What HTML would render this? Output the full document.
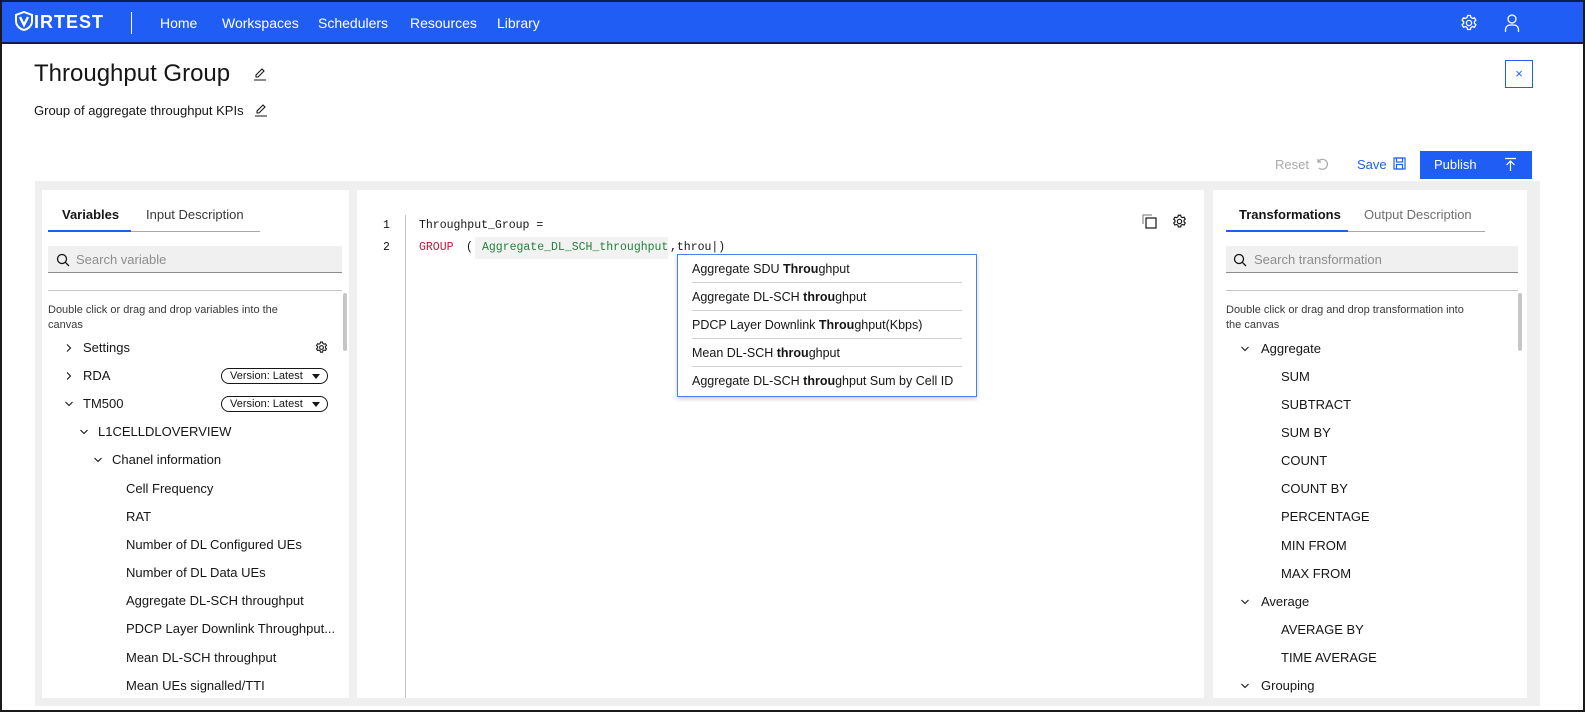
<!DOCTYPE html>
<html><head><meta charset="utf-8"><style>
*{box-sizing:border-box;margin:0;padding:0}
body{width:1585px;height:712px;overflow:hidden;background:#fff;font-family:"Liberation Sans",sans-serif;color:#161616;position:relative}
.frame{position:absolute;inset:0;border:2px solid #1a1a1a;border-top:none;pointer-events:none;z-index:10}
.nav{position:absolute;left:0;top:0;width:1585px;height:44px;background:#1f5df5;border-top:2px solid #0b1d4a;border-bottom:2px solid #0b1d4a}
.nav .logo{position:absolute;left:14px;top:9px;color:#fff;font-weight:bold;font-size:18px;letter-spacing:1px}
.nav .sep{position:absolute;left:131px;top:10px;width:1px;height:22px;background:#fff}
.nav a{position:absolute;top:13px;color:#fff;font-size:14px;text-decoration:none}
.abs{position:absolute}
.gray{position:absolute;left:35px;top:181px;width:1505px;height:525px;background:#efefef}
.panel{position:absolute;background:#fff;top:190px;height:508px}
.tab{position:absolute;font-size:13px}
.search{position:absolute;height:27px;background:#f0f0f0;border-bottom:1px solid #8d8d8d;font-size:13px;color:#8d8d8d;padding:6px 0 0 28px}
.row{position:absolute;font-size:13px;white-space:nowrap}
.chev{position:absolute;width:10px;height:10px}
.ver{position:absolute;width:107px;height:16px;border:1px solid #161616;border-radius:8px;font-size:11px;padding:1px 0 0 8px}
.ver:after{content:"";position:absolute;right:7px;top:5px;border:4px solid transparent;border-top:5px solid #161616}
.mono{font-family:"Liberation Mono",monospace;font-size:11.5px}
.dd{position:absolute;left:677px;top:254px;width:300px;height:143px;border:1px solid #4a7ff5;background:#fff;box-shadow:0 2px 4px rgba(0,0,0,.2)}
.dd div{margin:0 14px;height:28px;line-height:29px;font-size:12.5px;border-bottom:1px solid #d0d0d0}
.dd div:last-child{border:none}
</style></head><body>
<svg width="0" height="0" style="position:absolute"><defs>
<symbol id="cr" viewBox="0 0 10 10"><path d="M3 1.5 6.5 5 3 8.5" fill="none" stroke="#161616" stroke-width="1.1"/></symbol>
<symbol id="cd" viewBox="0 0 10 10"><path d="M1.5 3 5 6.5 8.5 3" fill="none" stroke="#161616" stroke-width="1.1"/></symbol>
</defs></svg>
<div class="nav">
<div class="logo"><svg width="20" height="20" viewBox="0 0 20 20" style="vertical-align:-3px"><path d="M10 1 L18 4 V10 C18 15 14 18 10 19 C6 18 2 15 2 10 V4 Z" fill="none" stroke="#fff" stroke-width="2"/><path d="M6 6 L10 14 L14 6" fill="none" stroke="#fff" stroke-width="2.4"/></svg>IRTEST</div>
<div class="sep"></div>
<a style="left:160px">Home</a><a style="left:222px">Workspaces</a><a style="left:318px">Schedulers</a><a style="left:410px">Resources</a><a style="left:497px">Library</a>
<svg class="abs" style="left:1460px;top:12px" width="18" height="18" viewBox="0 0 18 18" fill="none" stroke="#fff" stroke-width="1.3"><circle cx="9" cy="9" r="2.6"/><path d="M7.6 1.5h2.8l.5 2 1.6.9 2-.6 1.4 2.4-1.5 1.4v1.8l1.5 1.4-1.4 2.4-2-.6-1.6.9-.5 2H7.6l-.5-2-1.6-.9-2 .6-1.4-2.4 1.5-1.4V7.6L2.1 6.2l1.4-2.4 2 .6 1.6-.9z"/></svg>
<svg class="abs" style="left:1504px;top:11px" width="16" height="20" viewBox="0 0 16 20" fill="none" stroke="#fff" stroke-width="1.3"><circle cx="8" cy="6" r="4"/><path d="M1.5 19v-2.5a4.5 4.5 0 0 1 4.5-4.5h4a4.5 4.5 0 0 1 4.5 4.5V19"/></svg>
</div>
<div class="abs" style="left:34px;top:60px;font-size:24px">Throughput Group</div>
<svg class="abs" style="left:253px;top:67px" width="14" height="14" viewBox="0 0 14 14" fill="none" stroke="#161616" stroke-width="1.1"><path d="M3 10 L3 8 L9 2 L11 4 L5 10 Z M1 13 H13"/></svg>
<div class="abs" style="left:34px;top:103px;font-size:13px">Group of aggregate throughput KPIs</div>
<svg class="abs" style="left:254px;top:103px" width="14" height="14" viewBox="0 0 14 14" fill="none" stroke="#161616" stroke-width="1.1"><path d="M3 10 L3 8 L9 2 L11 4 L5 10 Z M1 13 H13"/></svg>
<div class="abs" style="left:1505px;top:60px;width:28px;height:28px;border:1px solid #1f5df5;color:#1f5df5;text-align:center;line-height:26px;font-size:13px">×</div>
<div class="abs" style="left:1275px;top:157px;font-size:13px;color:#a8a8a8">Reset</div>
<svg class="abs" style="left:1315px;top:157px" width="14" height="14" viewBox="0 0 14 14" fill="none" stroke="#a8a8a8" stroke-width="1.2"><path d="M4 11a5 5 0 1 0-1-6M3 2v3h3"/></svg>
<div class="abs" style="left:1357px;top:157px;font-size:13px;color:#1f5df5">Save</div>
<svg class="abs" style="left:1393px;top:157px" width="13" height="13" viewBox="0 0 13 13" fill="none" stroke="#1f5df5" stroke-width="1.2"><rect x="1" y="1" width="11" height="11"/><rect x="3.5" y="1" width="6" height="4"/><rect x="3.5" y="7.5" width="6" height="4.5"/></svg>
<div class="abs" style="left:1420px;top:151px;width:112px;height:28px;background:#1f5df5;color:#fff;font-size:13px;padding:6px 0 0 14px">Publish</div>
<svg class="abs" style="left:1504px;top:157px" width="13" height="15" viewBox="0 0 13 15" fill="none" stroke="#fff" stroke-width="1.2"><path d="M1 1.5h11M6.5 14V4M2.5 8l4-4 4 4"/></svg>

<div class="gray"></div>
<div class="panel" style="left:42px;width:307px">
<div class="tab" style="left:20px;top:17px;font-weight:bold">Variables</div>
<div class="tab" style="left:104px;top:17px;color:#393939">Input Description</div>
<div class="abs" style="left:6px;top:40px;width:83px;height:2px;background:#1f5df5"></div>
<div class="abs" style="left:89px;top:41px;width:129px;height:1px;background:#a8a8a8"></div>
<div class="search" style="left:6px;top:56px;width:294px">Search variable</div>
<svg class="abs" style="left:14px;top:63px" width="14" height="14" viewBox="0 0 14 14" fill="none" stroke="#161616" stroke-width="1.3"><circle cx="6" cy="6" r="4.5"/><path d="M9.3 9.3 13 13"/></svg>
<div class="abs" style="left:6px;top:100px;width:294px;height:1px;background:#c6c6c6"></div>
<div class="abs" style="left:301px;top:103px;width:4px;height:58px;background:#c6c6c6;border-radius:2px"></div>
<div class="abs" style="left:6px;top:113px;font-size:11px;line-height:15px;color:#393939">Double click or drag and drop variables into the<br>canvas</div>
</div>
<svg class="chev" style="left:64px;top:343px"><use href="#cr"/></svg><div class="row" style="left:83px;top:340px">Settings</div>
<svg class="abs" style="left:315px;top:341px" width="13" height="13" viewBox="0 0 18 18" fill="none" stroke="#161616" stroke-width="1.5"><circle cx="9" cy="9" r="2.6"/><path d="M7.6 1.5h2.8l.5 2 1.6.9 2-.6 1.4 2.4-1.5 1.4v1.8l1.5 1.4-1.4 2.4-2-.6-1.6.9-.5 2H7.6l-.5-2-1.6-.9-2 .6-1.4-2.4 1.5-1.4V7.6L2.1 6.2l1.4-2.4 2 .6 1.6-.9z"/></svg>
<svg class="chev" style="left:64px;top:371px"><use href="#cr"/></svg><div class="row" style="left:83px;top:368px">RDA</div>
<div class="ver" style="left:221px;top:368px">Version: Latest</div>
<svg class="chev" style="left:64px;top:399px"><use href="#cd"/></svg><div class="row" style="left:83px;top:396px">TM500</div>
<div class="ver" style="left:221px;top:396px">Version: Latest</div>
<svg class="chev" style="left:79px;top:427px"><use href="#cd"/></svg><div class="row" style="left:98px;top:424px">L1CELLDLOVERVIEW</div>
<svg class="chev" style="left:93px;top:455px"><use href="#cd"/></svg><div class="row" style="left:112px;top:452px">Chanel information</div>
<div class="row" style="left:126px;top:481px">Cell Frequency</div>
<div class="row" style="left:126px;top:509px">RAT</div>
<div class="row" style="left:126px;top:537px">Number of DL Configured UEs</div>
<div class="row" style="left:126px;top:565px">Number of DL Data UEs</div>
<div class="row" style="left:126px;top:593px">Aggregate DL-SCH throughput</div>
<div class="row" style="left:126px;top:621px">PDCP Layer Downlink Throughput...</div>
<div class="row" style="left:126px;top:650px">Mean DL-SCH throughput</div>
<div class="row" style="left:126px;top:678px">Mean UEs signalled/TTI</div>

<div class="panel" style="left:357px;width:847px"></div>
<div class="abs" style="left:405px;top:215px;width:1px;height:483px;background:#c6c6c6"></div>
<div class="abs mono" style="left:383px;top:219px">1</div>
<div class="abs mono" style="left:383px;top:241px">2</div>
<div class="abs mono" style="left:419px;top:219px">Throughput_Group =</div>
<div class="abs mono" style="left:419px;top:241px;color:#c0153a">GROUP</div>
<div class="abs mono" style="left:466px;top:241px">(</div>
<div class="abs mono" style="left:475px;top:237px;height:22px;width:193px;background:#f2f2f2;color:#24803e;padding:4px 0 0 7px">Aggregate_DL_SCH_throughput</div>
<div class="abs mono" style="left:670px;top:241px">,throu|)</div>
<svg class="abs" style="left:1142px;top:214px" width="15" height="15" viewBox="0 0 15 15" fill="none" stroke="#161616" stroke-width="1.2"><path d="M1 10V1h9" stroke="#8d8d8d"/><rect x="4" y="4" width="10" height="10"/></svg>
<svg class="abs" style="left:1172px;top:214px" width="15" height="15" viewBox="0 0 18 18" fill="none" stroke="#161616" stroke-width="1.4"><circle cx="9" cy="9" r="2.6"/><path d="M7.6 1.5h2.8l.5 2 1.6.9 2-.6 1.4 2.4-1.5 1.4v1.8l1.5 1.4-1.4 2.4-2-.6-1.6.9-.5 2H7.6l-.5-2-1.6-.9-2 .6-1.4-2.4 1.5-1.4V7.6L2.1 6.2l1.4-2.4 2 .6 1.6-.9z"/></svg>
<div class="dd">
<div>Aggregate SDU <b>Throu</b>ghput</div>
<div>Aggregate DL-SCH <b>throu</b>ghput</div>
<div>PDCP Layer Downlink <b>Throu</b>ghput(Kbps)</div>
<div>Mean DL-SCH <b>throu</b>ghput</div>
<div>Aggregate DL-SCH <b>throu</b>ghput Sum by Cell ID</div>
</div>

<div class="panel" style="left:1213px;width:314px">
<div class="tab" style="left:26px;top:17px;font-weight:bold">Transformations</div>
<div class="tab" style="left:151px;top:17px;color:#6f6f6f">Output Description</div>
<div class="abs" style="left:13px;top:40px;width:122px;height:2px;background:#1f5df5"></div>
<div class="abs" style="left:135px;top:41px;width:137px;height:1px;background:#a8a8a8"></div>
<div class="search" style="left:13px;top:56px;width:292px">Search transformation</div>
<svg class="abs" style="left:20px;top:63px" width="14" height="14" viewBox="0 0 14 14" fill="none" stroke="#161616" stroke-width="1.3"><circle cx="6" cy="6" r="4.5"/><path d="M9.3 9.3 13 13"/></svg>
<div class="abs" style="left:13px;top:100px;width:292px;height:1px;background:#c6c6c6"></div>
<div class="abs" style="left:305px;top:103px;width:4px;height:58px;background:#c6c6c6;border-radius:2px"></div>
<div class="abs" style="left:13px;top:113px;font-size:11px;line-height:15px;color:#393939">Double click or drag and drop transformation into<br>the canvas</div>
</div>
<svg class="chev" style="left:1240px;top:344px"><use href="#cd"/></svg><div class="row" style="left:1261px;top:341px">Aggregate</div>
<div class="row" style="left:1281px;top:369px">SUM</div>
<div class="row" style="left:1281px;top:397px">SUBTRACT</div>
<div class="row" style="left:1281px;top:425px">SUM BY</div>
<div class="row" style="left:1281px;top:453px">COUNT</div>
<div class="row" style="left:1281px;top:481px">COUNT BY</div>
<div class="row" style="left:1281px;top:509px">PERCENTAGE</div>
<div class="row" style="left:1281px;top:538px">MIN FROM</div>
<div class="row" style="left:1281px;top:566px">MAX FROM</div>
<svg class="chev" style="left:1240px;top:597px"><use href="#cd"/></svg><div class="row" style="left:1261px;top:594px">Average</div>
<div class="row" style="left:1281px;top:622px">AVERAGE BY</div>
<div class="row" style="left:1281px;top:650px">TIME AVERAGE</div>
<svg class="chev" style="left:1240px;top:681px"><use href="#cd"/></svg><div class="row" style="left:1261px;top:678px">Grouping</div>
<div class="frame"></div>
</body></html>
